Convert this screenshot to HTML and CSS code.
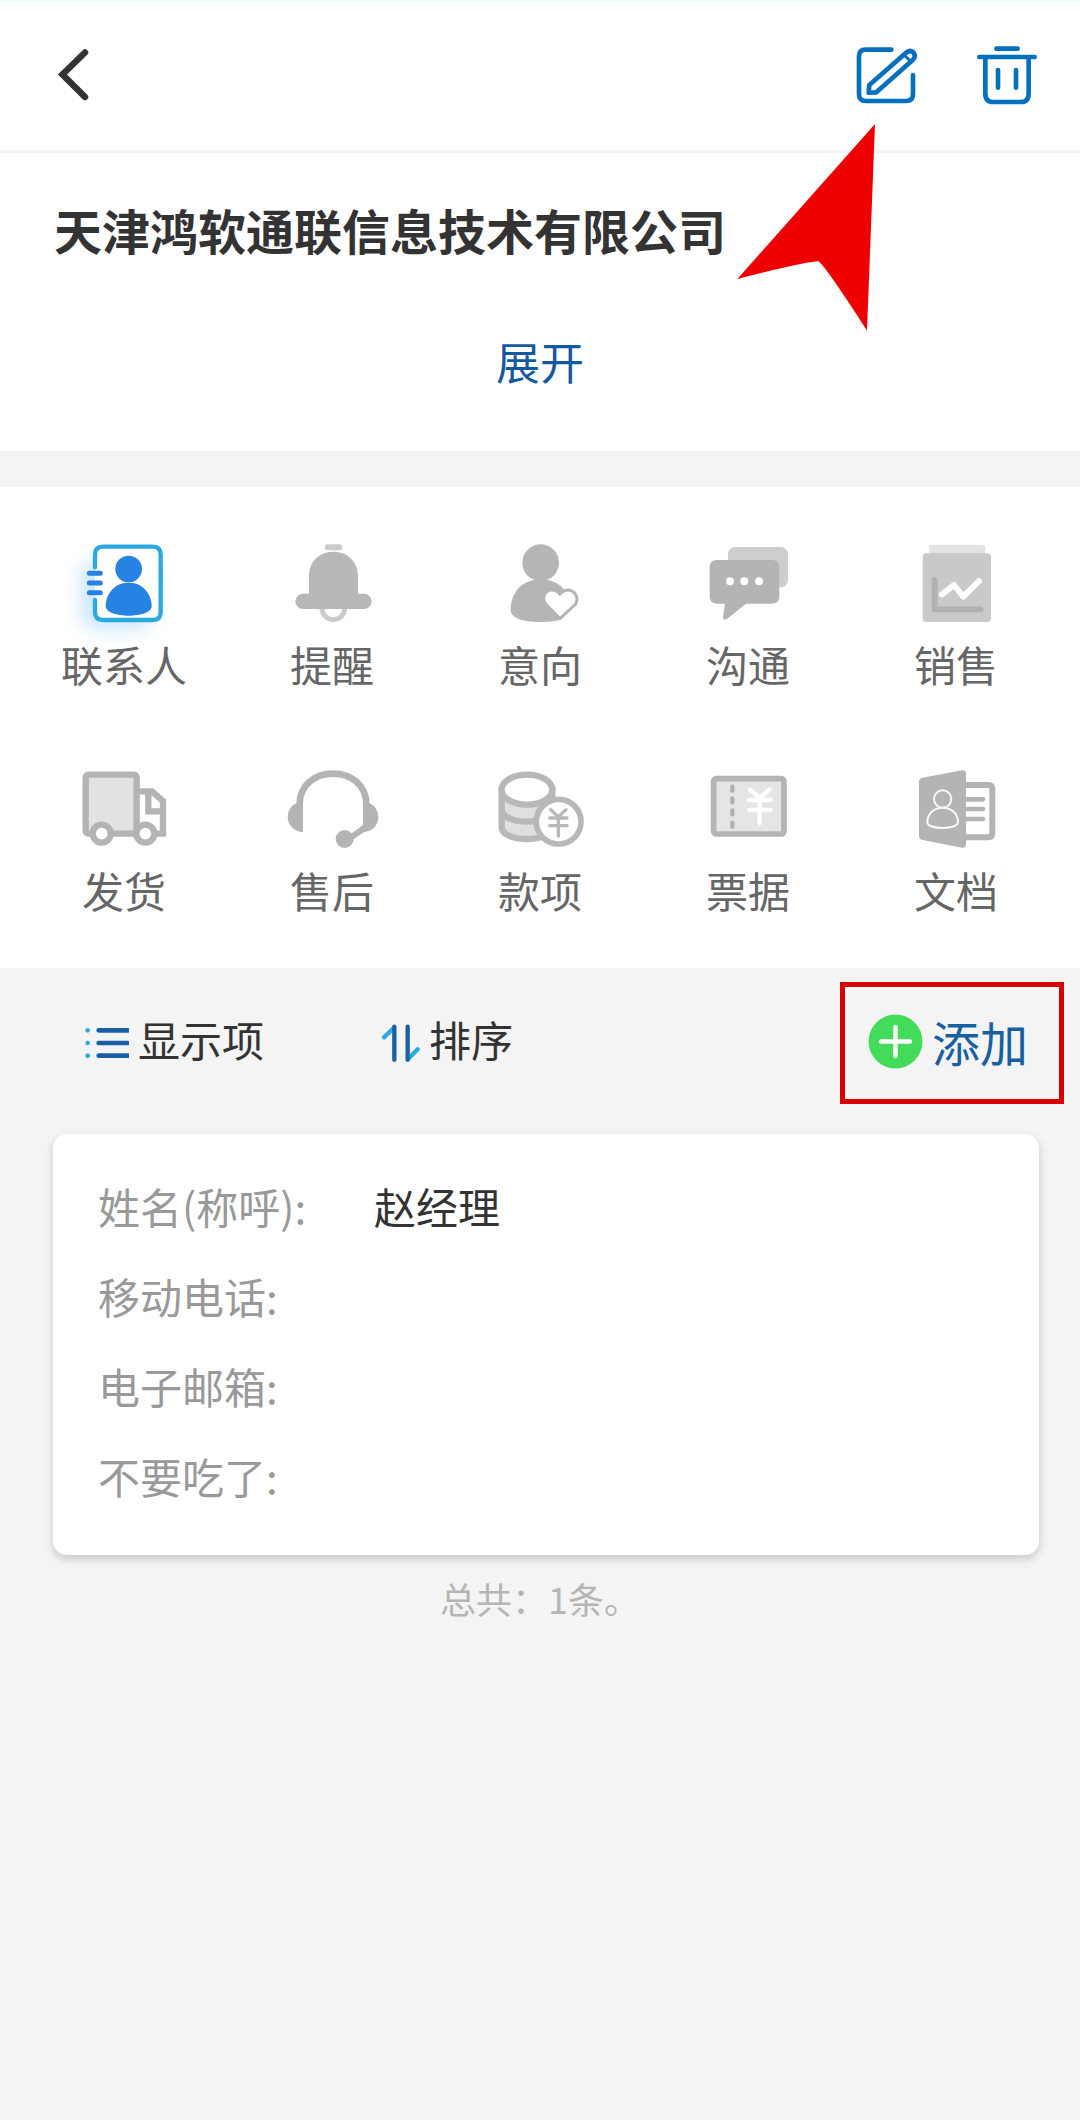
FILE: index.html
```html
<!DOCTYPE html>
<html lang="zh-CN">
<head>
<meta charset="utf-8">
<meta name="viewport" content="width=device-width, initial-scale=1">
<title>客户详情</title>
<link rel="stylesheet" href="styles.css">
</head>
<body>
<header class="topbar">
  <button class="icon-btn" type="button" aria-label="返回">
    <svg width="32" height="54" viewBox="57 49 32 54" fill="none" stroke="#333" stroke-width="6.5" stroke-linecap="round"><path d="M85 52.500L62.500 74.500L85 97"/></svg>
  </button>
  <div class="topbar-actions">
    <button class="icon-btn" type="button" aria-label="编辑">
      <svg width="62" height="62" viewBox="467 136 186 186" fill="none" stroke="#0570bd" stroke-width="14" stroke-linecap="round" stroke-linejoin="round">
        <path d="M573 150H496Q476 150 476 170V284Q476 304 496 304H618Q638 304 638 284V226"/>
        <path d="M505 279L507 256L619 158Q630 150 639 158Q648 170 638 180L528 278Z"/>
        <path d="M611 166L632 186" stroke-width="9"/>
      </svg>
    </button>
    <button class="icon-btn" type="button" aria-label="删除">
      <svg width="62" height="62" viewBox="828 136 186 186" fill="none" stroke="#0570bd" stroke-width="14" stroke-linecap="round">
        <path d="M889 147H953M838 172H1004M894 211V264M948 211V264"/>
        <path d="M856 174V282Q856 307 880 307H962Q986 307 986 282V174"/>
      </svg>
    </button>
  </div>
  <svg class="pointer" width="138" height="207" viewBox="111 372 414 621" aria-hidden="true"><path d="M525 372L112 837Q310 786 355 784Q372 792 501 992Z" fill="#ef0000"/></svg>
</header>

<main>
  <section class="company">
    <h1 class="company-name">天津鸿软通联信息技术有限公司</h1>
    <button class="expand" type="button">展开</button>
  </section>

  <nav class="modules">
    <a class="module" href="#contacts">
      <svg class="module-icon" viewBox="102 72 300 240">
        <defs><filter id="glow" x="-50%" y="-50%" width="200%" height="200%"><feGaussianBlur stdDeviation="26"/></filter></defs>
        <rect x="120" y="120" width="220" height="210" rx="50" fill="#cfe8fc" filter="url(#glow)"/>
        <rect x="165" y="80" width="197" height="220" rx="24" fill="#fff"/>
        <path d="M165 142V104Q165 80 189 80H338Q362 80 362 104V276Q362 300 338 300H189Q165 300 165 276V240" fill="none" stroke="#2aaae1" stroke-width="13" stroke-linecap="round"/>
        <path d="M148 160H181M148 189H181M148 218H181" stroke="#2683e4" stroke-width="15" stroke-linecap="round"/>
        <circle cx="266" cy="147" r="40" fill="#2683e4"/>
        <path d="M266 188C315 188 335 230 335 258C335 278 300 287 266 287S197 278 197 258C197 230 217 188 266 188Z" fill="#2683e4"/>
      </svg>
      <span>联系人</span>
    </a>
    <a class="module" href="#reminders">
      <svg class="module-icon" viewBox="726 72 300 240">
        <circle cx="880" cy="265" r="34" fill="none" stroke="#cbcbcb" stroke-width="15"/>
        <rect x="855" y="73" width="51" height="18" rx="6" fill="#cbcbcb"/>
        <path d="M807 221V168C807 122 840 95 880 95S954 122 954 168V221H972A23 23 0 0 1 972 267H789A23 23 0 0 1 789 221Z" fill="#b8b8b8"/>
      </svg>
      <span>提醒</span>
    </a>
    <a class="module" href="#intent">
      <svg class="module-icon" viewBox="90 72 300 240">
        <circle cx="242" cy="128" r="55" fill="#b5b5b5"/>
        <path d="M242 178C300 178 332 220 332 270C332 296 290 306 242 306S152 296 152 270C152 220 184 178 242 178Z" fill="#b5b5b5"/>
        <path d="M300 298L350 250V310H310Z" fill="#fff"/>
        <path d="M300 296L257 252C244 232 256 210 275 210C288 210 296 217 300 223C306 215 313 210 325 210C345 212 357 232 347 252Z" fill="#fff" stroke="#b5b5b5" stroke-width="9" stroke-linejoin="round"/>
      </svg>
      <span>意向</span>
    </a>
    <a class="module" href="#communication">
      <svg class="module-icon" viewBox="714 72 300 240">
        <rect x="804" y="81" width="180" height="121" rx="22" fill="#cecece"/>
        <path d="M771 120H936Q958 120 958 142V229Q958 251 936 251H858L801 297Q789 303 789 292L795 251H771Q749 251 749 229V142Q749 120 771 120Z" fill="#b4b4b4"/>
        <g fill="#fff"><circle cx="810" cy="184" r="12"/><circle cx="853" cy="184" r="12"/><circle cx="897" cy="184" r="12"/></g>
      </svg>
      <span>沟通</span>
    </a>
    <a class="module" href="#sales">
      <svg class="module-icon" viewBox="138 72 300 240">
        <rect x="207" y="74" width="169" height="50" rx="8" fill="#e3e3e3"/>
        <rect x="188" y="100" width="205" height="206" rx="11" fill="#c9c9c9"/>
        <g fill="none" stroke-linecap="round" stroke-linejoin="round"><path d="M224 179V268H362" stroke="#b1b1b1" stroke-width="17"/><path d="M246 223L282 195L310 230L357 183" stroke="#fff" stroke-width="18"/></g>
      </svg>
      <span>销售</span>
    </a>
    <a class="module" href="#delivery">
      <svg class="module-icon" viewBox="102 90 300 240" stroke="#b4b4b4" stroke-width="19">
        <rect x="137" y="104" width="153" height="177" rx="8" fill="#e2e2e2"/>
        <path d="M290 154H336L369 183V281H290ZM325 154V214H369" fill="#fff"/>
        <circle cx="185" cy="281" r="27" fill="#fff"/><circle cx="316" cy="281" r="27" fill="#fff"/>
      </svg>
      <span>发货</span>
    </a>
    <a class="module" href="#after-sales">
      <svg class="module-icon" viewBox="726 90 300 240">
        <path d="M779 204V192C779 136 824 101 879 101S979 136 979 192V204" fill="none" stroke="#b4b4b4" stroke-width="20"/>
        <path d="M789 190V276C762 276 743 254 743 231C743 212 755 196 769 190Z" fill="#b4b4b4"/>
        <path d="M969 190H989C1003 196 1015 212 1015 231C1015 256 996 275 973 276L934 302L924 288L969 255Z" fill="#b4b4b4"/>
        <circle cx="914" cy="297" r="27" fill="#b4b4b4"/>
      </svg>
      <span>售后</span>
    </a>
    <a class="module" href="#payments">
      <svg class="module-icon" viewBox="90 90 300 240" fill="none" stroke="#b8b8b8" stroke-width="19">
        <path d="M125 150V261C125 284 160 297 200 297S277 284 277 261V150Z" fill="#dfdfdf"/>
        <path d="M125 208C130 235 165 245 200 245S270 238 277 210"/>
        <ellipse cx="201" cy="149" rx="76" ry="45" fill="#fff"/>
        <circle cx="296" cy="245" r="67" fill="#fff" stroke-width="17"/>
        <path d="M272 209L295 231L318 209M295 231V288M269 234H321M269 257H321" stroke-width="10" stroke-linecap="round"/>
      </svg>
      <span>款项</span>
    </a>
    <a class="module" href="#invoices">
      <svg class="module-icon" viewBox="714 90 300 240">
        <rect x="761" y="116" width="211" height="166" rx="8" fill="#e5e5e5" stroke="#b4b4b4" stroke-width="17"/>
        <path d="M817 140V152M817 175V187M817 211V223M817 248V260" stroke="#b0b0b0" stroke-width="13" stroke-linecap="round"/>
        <path d="M870 149L899 174L928 149M899 174V249M867 180H932M867 210H932" fill="none" stroke="#fff" stroke-width="13" stroke-linecap="round"/>
      </svg>
      <span>票据</span>
    </a>
    <a class="module" href="#documents">
      <svg class="module-icon" viewBox="138 90 300 240">
        <path d="M310 135H385Q397 135 397 147V280Q397 292 385 292H310" fill="none" stroke="#b4b4b4" stroke-width="18"/>
        <path d="M310 178H369M310 207H369M310 237H369" stroke="#b4b4b4" stroke-width="14" stroke-linecap="round"/>
        <path d="M188 113L306 91Q318 90 318 101V313Q318 324 306 323L188 300Q177 297 177 288V124Q177 116 188 113Z" fill="#b4b4b4"/>
        <g fill="none" stroke="#f8f8f8" stroke-width="6"><circle cx="248" cy="177" r="26"/><path d="M248 203C278 203 294 225 294 246C294 258 272 264 248 264S202 258 202 246C202 225 218 203 248 203Z"/></g>
      </svg>
      <span>文档</span>
    </a>
  </nav>

  <div class="toolbar">
    <div class="toolbar-tools">
      <button class="tool" type="button">
        <svg width="44" height="38" viewBox="75 130 132 114">
          <g fill="#2aaae1"><circle cx="83" cy="149" r="7"/><circle cx="83" cy="187" r="7"/><circle cx="83" cy="225" r="7"/></g>
          <path d="M116 149H203M116 187H203M116 225H203" stroke="#1860a3" stroke-width="14" stroke-linecap="round"/>
        </svg>
        <span>显示项</span>
      </button>
      <button class="tool" type="button">
        <svg width="38" height="38" viewBox="965 128 114 114" fill="none" stroke-width="13" stroke-linecap="round">
          <path d="M971 168L1000 140M1072 204L1044 232" stroke="#2aaae1"/>
          <path d="M1002 136V235M1042 136V235" stroke="#1860a3"/>
        </svg>
        <span>排序</span>
      </button>
    </div>
    <button class="add" type="button">
      <svg width="55" height="55" viewBox="0 0 55 55"><circle cx="27.500" cy="27.500" r="27" fill="#43dc5a"/><path d="M27.500 13V42M13 27.500H42" stroke="#fff" stroke-width="4.500" stroke-linecap="round"/></svg>
      <span>添加</span>
    </button>
  </div>

  <dl class="card">
    <div class="field"><dt>姓名(称呼):</dt><dd>赵经理</dd></div>
    <div class="field"><dt>移动电话:</dt><dd></dd></div>
    <div class="field"><dt>电子邮箱:</dt><dd></dd></div>
    <div class="field"><dt>不要吃了:</dt><dd></dd></div>
  </dl>
  <p class="total">总共：1条。</p>
</main>
</body>
</html>
```
FILE: styles.css
```css
* {
  box-sizing: border-box;
}

body {
  margin: 0;
  min-height: 100vh;
  background: #f4f4f4;
  color: #333;
  font-family: "Noto Sans CJK SC", sans-serif;
  font-size: 42px;
  line-height: 60px;
}

button {
  padding: 0;
  border: 0;
  background: none;
  color: inherit;
  font: inherit;
  cursor: pointer;
}

svg {
  display: block;
  flex: none;
}

.topbar {
  position: relative;
  display: flex;
  align-items: center;
  justify-content: space-between;
  height: 153px;
  padding: 0 42px 0 57px;
  border-top: 1px solid #e6fdfd;
  border-bottom: 3px solid #f4f4f4;
  background: #fff;
}

.topbar-actions {
  display: flex;
  gap: 58px;
}

.pointer {
  position: absolute;
  top: 123px;
  right: 205px;
}

.company {
  display: flex;
  flex-direction: column;
  align-items: center;
  gap: 72px;
  padding: 46px 54px 60px;
  background: #fff;
}

.company-name {
  align-self: flex-start;
  margin: 0;
  font-size: 48px;
  font-weight: 700;
}

.expand {
  color: #1459a0;
  font-size: 44px;
}

.modules {
  display: grid;
  grid-template-columns: repeat(5, 1fr);
  row-gap: 76px;
  margin-top: 36px;
  padding: 57px 20px 48px;
  background: #fff;
}

.module {
  display: flex;
  flex-direction: column;
  align-items: center;
  gap: 10px;
  color: #666;
  text-decoration: none;
}

.module-icon {
  width: 100px;
  height: 80px;
  overflow: visible;
}

.module span {
  position: relative;
}

.toolbar {
  display: flex;
  align-items: center;
  justify-content: space-between;
  padding: 14px 16px 30px 85px;
}

.toolbar-tools {
  display: flex;
  gap: 118px;
}

.tool {
  display: flex;
  align-items: center;
  gap: 9px;
}

.tool span {
  padding-bottom: 8px;
}

.add {
  display: flex;
  align-items: center;
  gap: 9px;
  height: 122px;
  padding: 0 31px 4px 23px;
  border: 5px solid #d80000;
  color: #1860a3;
  font-size: 48px;
}

.card {
  margin: 0 41px 0 53px;
  padding: 27px 45px 34px;
  border-radius: 14px;
  background: #fff;
  box-shadow: 0 4px 8px rgba(0, 0, 0, 0.18);
}

.field {
  display: flex;
  line-height: 90px;
}

.field dt {
  flex: none;
  width: 276px;
  color: #999;
}

.field dd {
  margin: 0;
}

.total {
  margin: 13px 0;
  color: #b5b5b5;
  font-size: 36px;
  text-align: center;
}
```
